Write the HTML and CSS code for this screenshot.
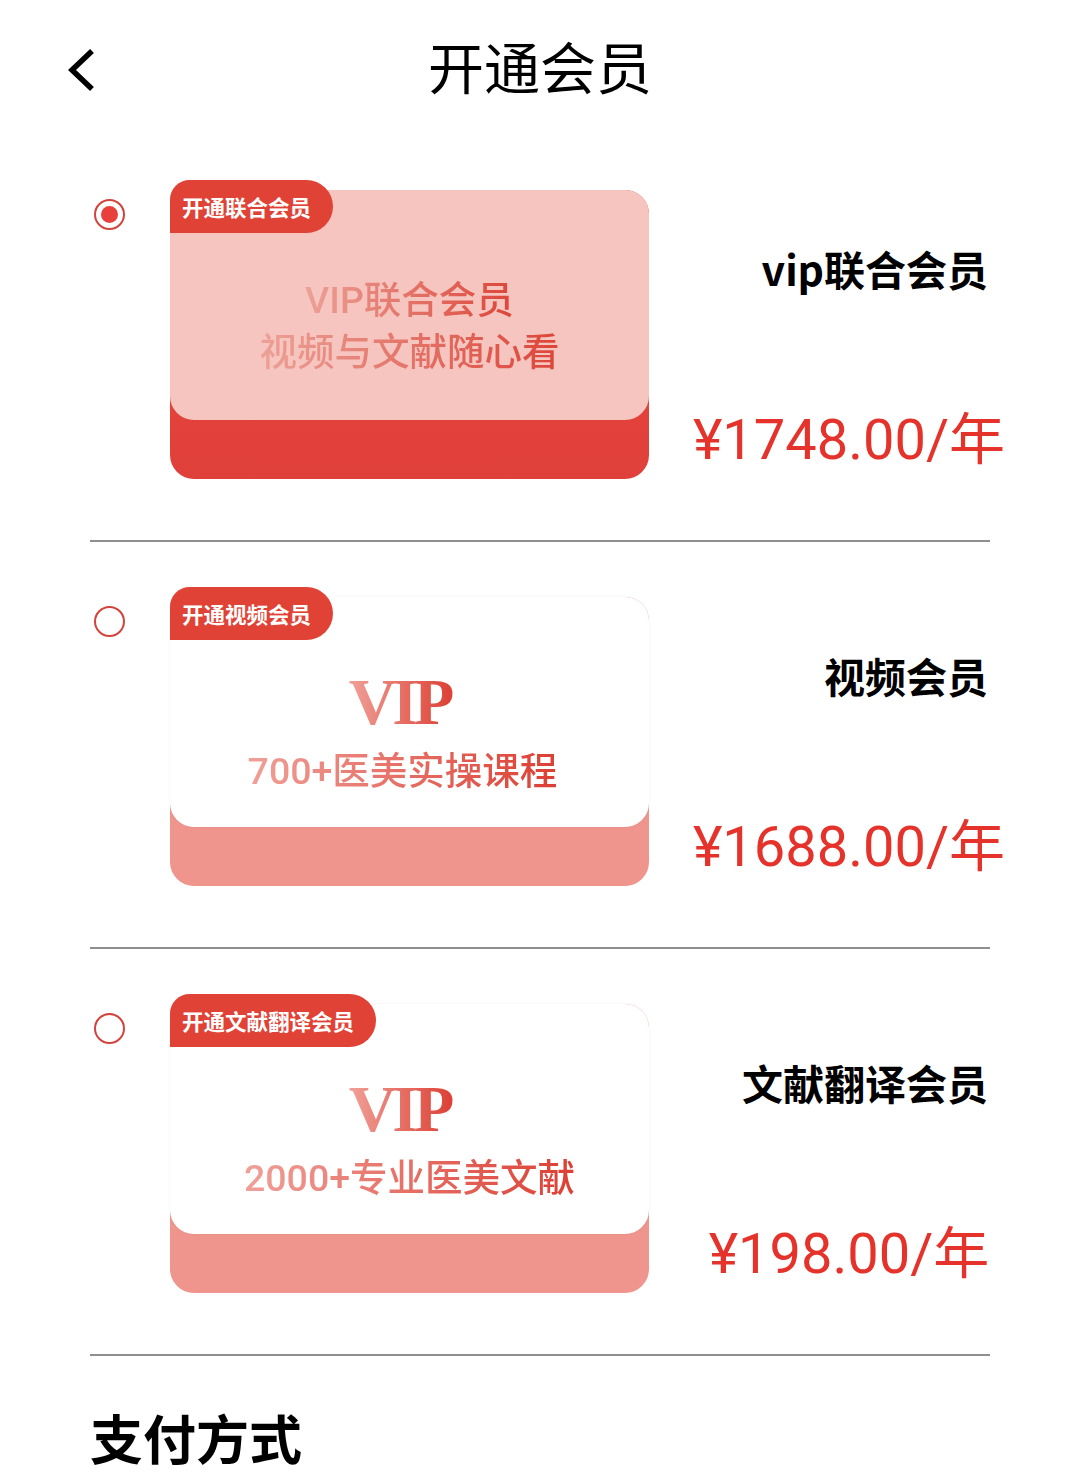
FILE: index.html
```html
<!DOCTYPE html>
<html lang="zh-CN">
<head>
  <meta charset="UTF-8" />
  <title>开通会员</title>
  <meta name="viewport" content="width=device-width, initial-scale=1.0" />
  <link rel="stylesheet" href="styles.css">
</head>
<body>
  <!-- Top bar -->
  <div class="topbar">
    <svg class="back" width="30" height="44" viewBox="0 0 30 44">
      <polyline points="26,3 6,22 26,41" fill="none" stroke="#000" stroke-width="5.5" stroke-linejoin="miter" />
    </svg>
    <h1 class="title">开通会员</h1>
  </div>

  <div class="page">
    <!-- Plan: joint -->
    <div class="plan">
      <div class="radio-col"><span class="radio checked"></span></div>
      <div class="card card-hot">
        <div class="tag">开通联合会员</div>
        <div class="card-front">
          <div class="grad-text line">VIP联合会员</div>
          <div class="grad-text line">视频与文献随心看</div>
        </div>
      </div>
      <div class="info">
        <div class="name">vip联合会员</div>
        <div class="price"><span>¥1748.00/年</span></div>
      </div>
    </div>

    <!-- Plan: video -->
    <div class="plan">
      <div class="radio-col"><span class="radio"></span></div>
      <div class="card">
        <div class="tag">开通视频会员</div>
        <div class="card-front">
          <div class="grad-text vip">VIP</div>
          <div class="grad-text line shift">700+医美实操课程</div>
        </div>
      </div>
      <div class="info">
        <div class="name">视频会员</div>
        <div class="price"><span>¥1688.00/年</span></div>
      </div>
    </div>

    <!-- Plan: translation -->
    <div class="plan">
      <div class="radio-col"><span class="radio"></span></div>
      <div class="card">
        <div class="tag">开通文献翻译会员</div>
        <div class="card-front">
          <div class="grad-text vip">VIP</div>
          <div class="grad-text line">2000+专业医美文献</div>
        </div>
      </div>
      <div class="info">
        <div class="name">文献翻译会员</div>
        <div class="price"><span>¥198.00/年</span></div>
      </div>
    </div>

    <h2 class="pay-title">支付方式</h2>
  </div>
</body>
</html>
```

FILE: styles.css
```css
* {
  box-sizing: border-box;
}

body {
  margin: 0;
  background: #fff;
  color: #000;
  font-family: Roboto, "Noto Sans CJK SC", sans-serif;
}

.topbar {
  position: relative;
  height: 135px;
  display: flex;
  align-items: center;
  justify-content: center;
  padding-bottom: 6px;
}

.back {
  position: absolute;
  left: 66px;
  top: 48px;
}

.title {
  margin: 0;
  font-family: "Noto Sans CJK SC", sans-serif;
  font-weight: 400;
  font-size: 56px;
  line-height: 1.2;
}

.page {
  margin: 0 90px;
}

.plan {
  display: flex;
  padding: 45px 0 61px;
  border-bottom: 2px solid #8e8e8e;
}

.radio-col {
  width: 80px;
  padding: 19px 0 0 4px;
}

.radio {
  display: flex;
  align-items: center;
  justify-content: center;
  width: 31px;
  height: 31px;
  border: 2px solid #d2433c;
  border-radius: 50%;
}

.radio.checked::after {
  content: "";
  width: 17px;
  height: 17px;
  border-radius: 50%;
  background: #e8403a;
}

.card {
  position: relative;
  width: 479px;
  height: 289px;
  margin-top: 10px;
  border-radius: 24px;
  background: #ef958d;
}

.card-front {
  height: 230px;
  padding-top: 43px;
  border-radius: 24px;
  background: #fff;
  box-shadow: 0 0 3px rgba(0, 0, 0, 0.06);
  display: flex;
  flex-direction: column;
  align-items: center;
  justify-content: center;
}

.card-hot {
  background: linear-gradient(#e8493b, #e0403a);
}

.card-hot .card-front {
  background: #f6c5c0;
  box-shadow: none;
}

.tag {
  position: absolute;
  left: 0;
  top: -10px;
  height: 53px;
  padding: 0 22px 0 12px;
  display: flex;
  align-items: center;
  border-radius: 20px 27px 27px 0;
  background: #e04236;
  color: #fff;
  font-family: "Noto Sans CJK SC", sans-serif;
  font-size: 21.5px;
  font-weight: 700;
}

.grad-text {
  background: linear-gradient(90deg, #f0a098, #dc3f33);
  -webkit-background-clip: text;
  background-clip: text;
  color: transparent;
}

.card-hot .grad-text {
  background-image: linear-gradient(90deg, #eca197, #dc4538);
}

.line {
  font-family: Roboto, "Noto Sans CJK SC", sans-serif;
  font-weight: 500;
  font-size: 37.5px;
  line-height: 54px;
}

.card-hot .line {
  margin-top: -2px;
}

.line.shift {
  margin-right: 14px;
}

.vip {
  font-family: "Liberation Serif", serif;
  font-weight: 700;
  font-size: 66px;
  line-height: 64px;
  letter-spacing: -4px;
  margin: 0 16px 10px 0;
  padding-right: 4px;
}

.info {
  flex: 1;
  display: flex;
  flex-direction: column;
  align-items: flex-end;
  padding: 63px 2px 0 0;
}

.name {
  font-family: "Noto Sans CJK SC", sans-serif;
  font-weight: 700;
  font-size: 41px;
  line-height: 50px;
}

.price {
  width: 278px;
  margin-top: 115px;
  display: flex;
  justify-content: center;
  white-space: nowrap;
  color: #e5322a;
  font-size: 56px;
  line-height: 64px;
}

.pay-title {
  margin: 0;
  padding-top: 50px;
  font-family: "Noto Sans CJK SC", sans-serif;
  font-weight: 700;
  font-size: 53px;
  line-height: 1.2;
}
```
